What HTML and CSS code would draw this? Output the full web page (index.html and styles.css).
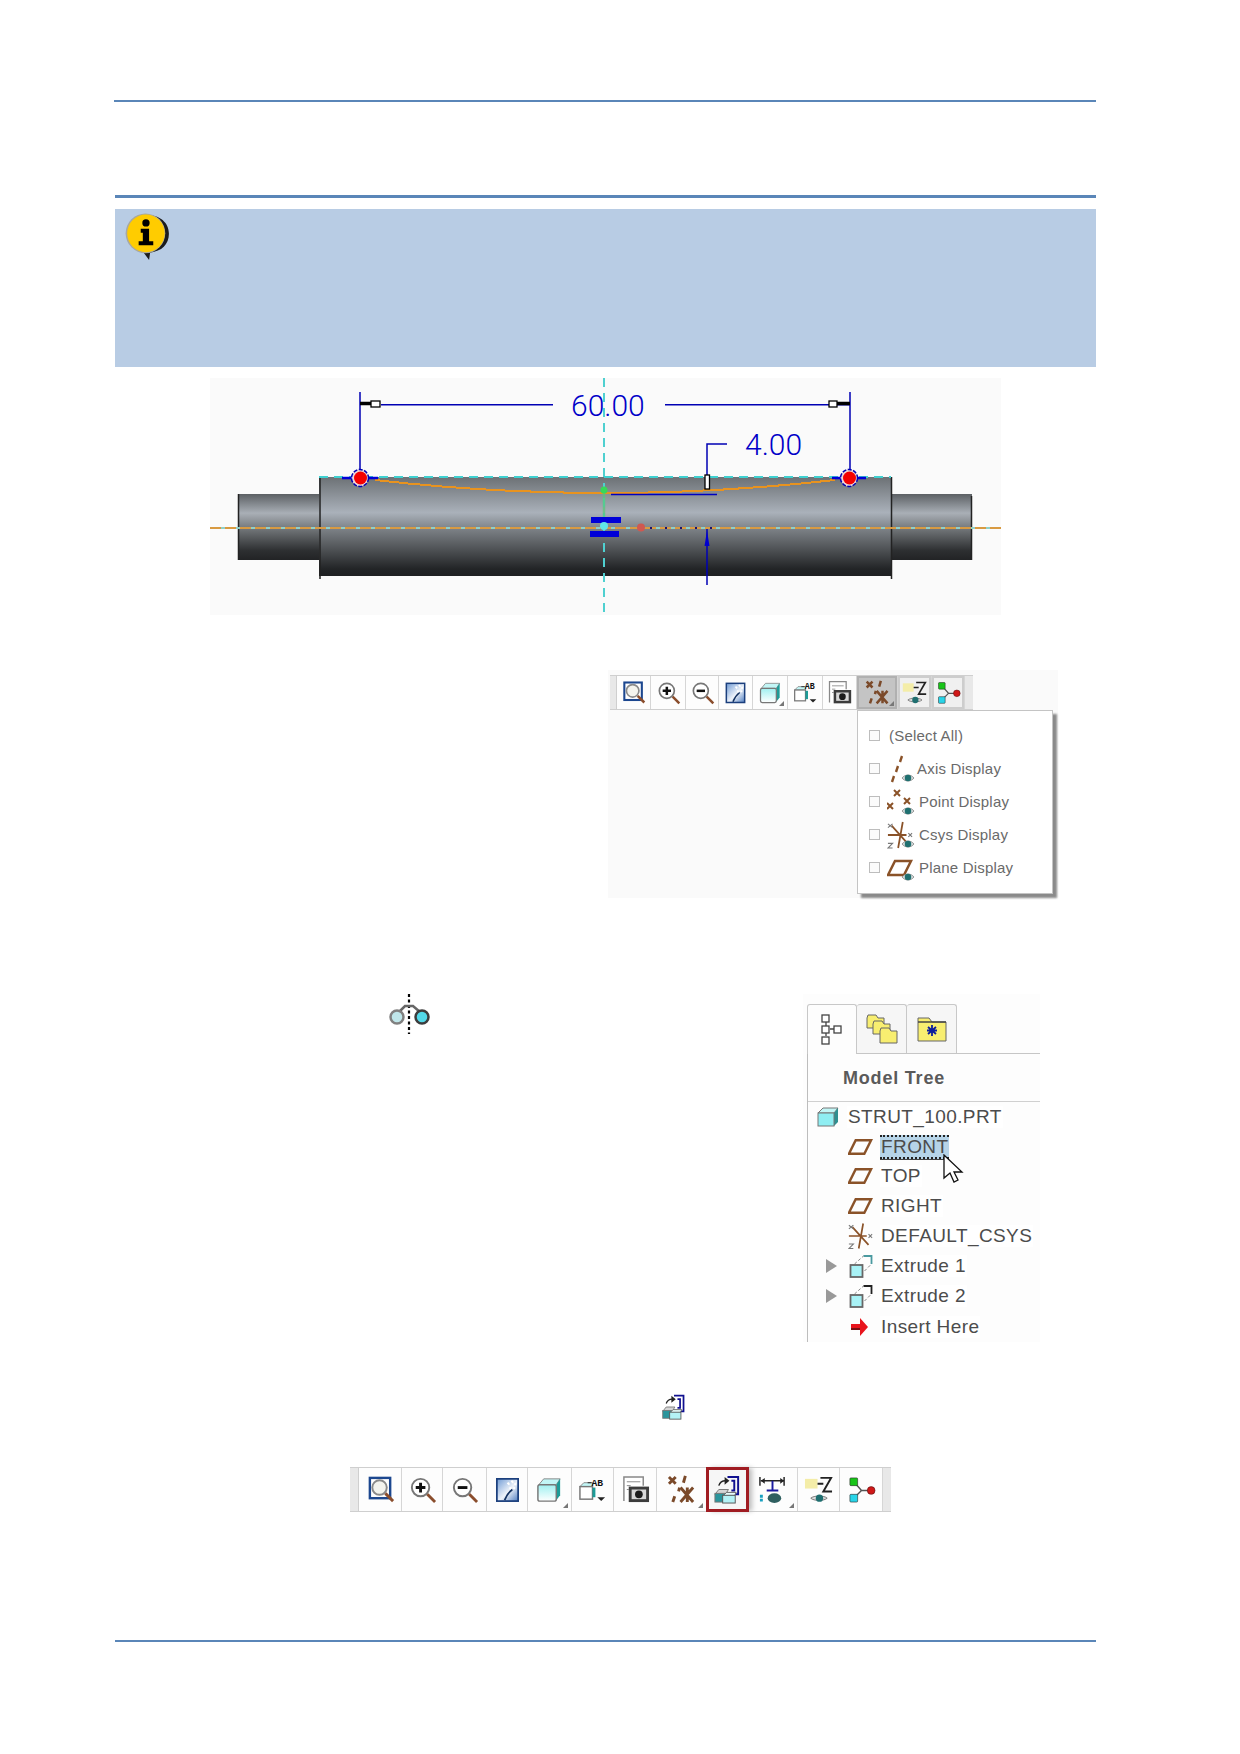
FILE: index.html
```html
<!DOCTYPE html>
<html lang="en">
<head>
  <meta charset="UTF-8">
  <title>Datum display and model tree</title>
  <link rel="stylesheet" href="styles.css">
</head>
<body>

  <svg class="defs" width="0" height="0" aria-hidden="true">
    <defs>
      <linearGradient id="g-main" x1="0" y1="0" x2="0" y2="1">
        <stop offset="0" stop-color="#6c7175"/>
        <stop offset=".36" stop-color="#aab1ba"/>
        <stop offset=".53" stop-color="#7b8085"/>
        <stop offset=".77" stop-color="#46494c"/>
        <stop offset=".93" stop-color="#222426"/>
        <stop offset="1" stop-color="#1f2022"/>
      </linearGradient>
      <linearGradient id="g-stub" x1="0" y1="0" x2="0" y2="1">
        <stop offset="0" stop-color="#5c6064"/>
        <stop offset=".29" stop-color="#a9afb6"/>
        <stop offset=".55" stop-color="#6d7174"/>
        <stop offset=".86" stop-color="#2d2f31"/>
        <stop offset="1" stop-color="#222325"/>
      </linearGradient>
      <linearGradient id="g-cube" x1="0" y1="0" x2="0" y2="1">
        <stop offset="0" stop-color="#9ff0f0"/>
        <stop offset="1" stop-color="#ffffff"/>
      </linearGradient>
      <linearGradient id="g-paint" x1="0" y1="0" x2="1" y2="1">
        <stop offset="0" stop-color="#6f9ad4"/>
        <stop offset=".55" stop-color="#eef3fa"/>
        <stop offset="1" stop-color="#4f7dc0"/>
      </linearGradient>

      <symbol id="i-fit" viewBox="0 0 30 30">
        <rect x="4" y="3" width="21" height="21" fill="#fff" stroke="#1c478f" stroke-width="2.500"/>
        <circle cx="14" cy="13" r="7.500" fill="#f4f4ee" stroke="#8a8a8a" stroke-width="2"/>
        <path d="M20 19l8 8" stroke="#8a4d2c" stroke-width="3"/>
      </symbol>
      <symbol id="i-in" viewBox="0 0 30 30">
        <circle cx="13" cy="13" r="9" fill="#fff" stroke="#777" stroke-width="2"/>
        <path d="M8 13h10M13 8v10" stroke="#111" stroke-width="3"/>
        <path d="M20 20l8 8" stroke="#8a4d2c" stroke-width="3"/>
      </symbol>
      <symbol id="i-out" viewBox="0 0 30 30">
        <circle cx="13" cy="13" r="9" fill="#fff" stroke="#777" stroke-width="2"/>
        <path d="M8 13h10" stroke="#111" stroke-width="3"/>
        <path d="M20 20l8 8" stroke="#8a4d2c" stroke-width="3"/>
      </symbol>
      <symbol id="i-paint" viewBox="0 0 30 30">
        <rect x="4" y="4" width="22" height="23" fill="url(#g-paint)" stroke="#1b3f7d" stroke-width="1.800"/>
        <path d="M12 26c2-5 4-8 8-11" fill="none" stroke="#12305f" stroke-width="1.800"/>
        <path d="M15 8l2 2M19 6l2 2M22 9l2 1M17 13l2 1M21 13l2 1" stroke="#fff" stroke-width="2"/>
      </symbol>
      <symbol id="i-cube" viewBox="0 0 30 30">
        <path d="M4 10l5-6h17l-4 6z" fill="#c2f6f6" stroke="#888"/>
        <path d="M22 10l4-6v17l-4 5z" fill="#1d9c98"/>
        <rect x="3" y="10" width="19" height="17" rx="2" fill="url(#g-cube)" stroke="#777" stroke-width="1.500"/>
      </symbol>
      <symbol id="i-views" viewBox="0 0 30 30">
        <path d="M2 12l4-4h9v4z" fill="#c2f6f6" stroke="#888"/>
        <rect x="2" y="12" width="13" height="13" fill="#fff" stroke="#777" stroke-width="1.500"/>
        <path d="M15 13h3v10h-3z" fill="#1d9c98"/>
        <path d="M10 8h4" stroke="#222"/>
        <text x="14" y="11" class="ab">AB</text>
        <path d="M20 23h8l-4 4z" fill="#222"/>
      </symbol>
      <symbol id="i-camera" viewBox="0 0 30 30">
        <path d="M3 27V2h20v9" fill="#fff" stroke="#888" stroke-width="1.500"/>
        <path d="M6 7h14M6 11h4M6 15h2" stroke="#888"/>
        <rect x="8" y="12" width="21" height="16" fill="#3c3c3c"/>
        <rect x="11" y="15" width="15" height="10" fill="#d8d8d8"/>
        <circle cx="18.500" cy="20" r="4" fill="#1c1c1c"/>
      </symbol>
      <symbol id="i-datum" viewBox="0 0 30 30">
        <g stroke="#7b4a2a" stroke-width="3" fill="none">
          <path d="M2 2l7 7M9 2L2 9M19 1l-2 7M6 28l2-6M12 17l1-4"/>
          <path d="M14 13l13 15M27 13L14 28M21 13v15"/>
        </g>
      </symbol>
      <symbol id="i-spin" viewBox="0 0 30 30">
        <path d="M15 2h11v18h-8" fill="none" stroke="#101090" stroke-width="2"/>
        <path d="M19 6h3v10h-3" fill="none" stroke="#101090" stroke-width="2"/>
        <path d="M6 11c1-3 3-5 7-5" fill="none" stroke="#222" stroke-width="1.500"/>
        <path d="M12 2l5 4-5 4z" fill="#222"/>
        <path d="M2 20l4-5h10l-3 5z" fill="#d4d4d4" stroke="#777"/>
        <rect x="2" y="19" width="11" height="9" fill="#2a959c" stroke="#777"/>
        <path d="M10 22l4-4h10l-2 4z" fill="#e6fafa" stroke="#666"/>
        <rect x="10" y="21" width="13" height="8" fill="#b4f2f6" stroke="#555"/>
      </symbol>
      <symbol id="i-dims" viewBox="0 0 30 30">
        <path d="M2 2v9M27 2v9M3 6h24" stroke="#222" stroke-width="1.500" fill="none"/>
        <path d="M3 6l4-3v6zM27 6l-4-3v6z" fill="#222"/>
        <path d="M15 6v10M9 16h12" stroke="#1a1aa0" stroke-width="2" fill="none"/>
        <path d="M2 22h3M2 26h3" stroke="#18a0c0" stroke-width="3"/>
        <ellipse cx="17" cy="24" rx="7" ry="5" fill="#2f5f60"/>
      </symbol>
      <symbol id="i-note" viewBox="0 0 30 30">
        <rect x="1" y="4" width="13" height="10" fill="#f4eda8"/>
        <path d="M14 9h6M17 3h11l-8 14h9" fill="none" stroke="#222" stroke-width="2"/>
        <path d="M7 24c3-3 14-3 17 0-3 3-14 3-17 0z" fill="#ddd" stroke="#777"/>
        <circle cx="16" cy="24" r="3.800" fill="#1f6f70"/>
      </symbol>
      <symbol id="i-tree" viewBox="0 0 30 30">
        <path d="M8 8l7 8-7 7M15 16h9" fill="none" stroke="#555" stroke-width="1.500"/>
        <rect x="3" y="3" width="8" height="8" rx="1" fill="#18c418" stroke="#222" stroke-width=".6"/>
        <circle cx="25" cy="16" r="4" fill="#d01818" stroke="#511" stroke-width=".6"/>
        <rect x="3" y="20" width="8" height="8" rx="1" fill="#28d4e8" stroke="#222" stroke-width=".6"/>
      </symbol>

      <symbol id="i-eye" viewBox="0 0 14 10">
        <path d="M1 5c3-4 9-4 12 0-3 4-9 4-12 0z" fill="#cfd8d8" stroke="#777" stroke-width=".7"/>
        <circle cx="7" cy="5" r="3.200" fill="#1f7070"/>
      </symbol>
      <symbol id="i-plane" viewBox="0 0 26 18">
        <path d="M8 2h16l-7 14H1z" fill="none" stroke="#8a5228" stroke-width="2.500"/>
      </symbol>
      <symbol id="i-csys" viewBox="0 0 28 30">
        <g stroke="#8a5228" stroke-width="1.900" fill="none">
          <path d="M1 15h20M17 1l-5 28M5 5l18 20"/>
        </g>
        <path d="M1 3l5 4M6 3l-5 4M1 24h5l-5 5h5M23 13l4 4M27 13l-4 4" stroke="#777" stroke-width="1.200" fill="none"/>
      </symbol>
      <symbol id="i-extrude" viewBox="0 0 24 24">
        <path d="M14 2h8v8" stroke="currentColor" stroke-width="1.800" fill="none"/>
        <path d="M5 10l9-8M15 17l7-7" stroke="#888" stroke-dasharray="3 2" fill="none"/>
        <rect x="1" y="11" width="12" height="12" fill="#a8f2f6" stroke="#666" stroke-width="1.800"/>
      </symbol>
    </defs>
  </svg>

  <main class="page">
    <div class="rule rule-head"></div>
    <div class="rule rule-title"></div>

    <section class="note">
      <svg class="note-icon" viewBox="0 0 44 46" width="46" height="48" aria-hidden="true">
        <path d="M24 45l1-7c11-1 18-8 18-18C43 9 34 2 22 2S2 10 3 22c1 8 7 13 15 15z" fill="#1c1c1c"/>
        <circle cx="20.500" cy="19.500" r="19" fill="#a8a8a0"/>
        <circle cx="21" cy="19.500" r="18" fill="#ffcc00"/>
        <circle cx="21" cy="9.500" r="3.500" fill="#000"/>
        <path d="M16 15h8v12h4v4H14v-4h4v-8h-2z" fill="#000"/>
      </svg>
    </section>

    <figure class="fig-shaft">
      <svg viewBox="0 0 791 237" width="791" height="237" role="img" aria-label="Shaft sketch with dimensions 60.00 and 4.00">
        <rect x="28" y="116" width="82" height="66" fill="url(#g-stub)"/>
        <rect x="681" y="116" width="81" height="66" fill="url(#g-stub)"/>
        <rect x="109" y="99" width="572" height="99" fill="url(#g-main)"/>
        <path d="M110 98v103M681.500 99v102M28.500 116v66M761.500 118v64" stroke="#222" stroke-width="1.500"/>

        <path d="M394 0v237" stroke="#4fd0d0" stroke-width="2" stroke-dasharray="9 6"/>
        <path d="M109 99h572" stroke="#3fd0d0" stroke-width="2" stroke-dasharray="9 6"/>
        <path d="M0 150h791" stroke="#8fd0c8" stroke-width="2"/>
        <path d="M0 150h791" stroke="#d89a42" stroke-width="2.200" stroke-dasharray="11 4"/>

        <path d="M165 102Q394 128 625 102" fill="none" stroke="#e8931f" stroke-width="2" shape-rendering="crispEdges"/>

        <path d="M394 112v30" stroke="#58c878" stroke-width="2.500" opacity=".7"/>
        <circle cx="394" cy="112" r="3.500" fill="#38d858"/>
        <rect x="381" y="139" width="30" height="6" fill="#0000d8"/>
        <rect x="380" y="153" width="29" height="6" fill="#0000d8"/>
        <circle cx="394" cy="148" r="4" fill="#60e8e8"/>
        <circle cx="431" cy="149.500" r="4" fill="#d05850"/>
        <path d="M440 150h66" stroke="#20106a" stroke-width="2" stroke-dasharray="2 13"/>

        <path d="M401 116.500h106" stroke="#0000c0" stroke-width="1.500"/>
        <path d="M517 66h-20v31" fill="none" stroke="#0000b4" stroke-width="1.500"/>
        <rect x="495" y="97" width="4.500" height="14" fill="#fff" stroke="#000" stroke-width="1.300"/>
        <path d="M497 151v56" stroke="#0000b4" stroke-width="1.500"/>
        <path d="M497 153l-2.500 15h5z" fill="#0000d0"/>

        <path d="M150 14v85M640 14v85M171 26.700h172M455 26.700h185" fill="none" stroke="#0000b4" stroke-width="1.500"/>
        <path d="M150 25.500h11M627 25.500h13" stroke="#000" stroke-width="3.500"/>
        <rect x="161" y="23" width="9" height="6" fill="#fff" stroke="#000" stroke-width="1.300"/>
        <rect x="619" y="23" width="8" height="6" fill="#fff" stroke="#000" stroke-width="1.300"/>

        <path d="M132 100h36" stroke="#0000d8" stroke-width="2.500"/>
        <path d="M622 100h34" stroke="#0000d8" stroke-width="2.500"/>
        <circle cx="150" cy="100" r="8.500" fill="#f0d8d8" stroke="#0000b4" stroke-width="1.500" stroke-dasharray="4 1.500"/>
        <circle cx="150.500" cy="100" r="6.500" fill="#f40000"/>
        <circle cx="639" cy="100" r="8.500" fill="#f0d8d8" stroke="#0000b4" stroke-width="1.500" stroke-dasharray="4 1.500"/>
        <circle cx="639.500" cy="100" r="6.500" fill="#f40000"/>

        <text x="361" y="38" class="dim">60.00</text>
        <text x="535" y="77" class="dim">4.00</text>
      </svg>
    </figure>

    <figure class="fig-toolbar">
      <div class="toolbar toolbar-small">
        <span class="grip"></span>
        <span class="tool"><svg><use href="#i-fit"/></svg></span>
        <span class="tool"><svg><use href="#i-in"/></svg></span>
        <span class="tool"><svg><use href="#i-out"/></svg></span>
        <span class="tool"><svg><use href="#i-paint"/></svg></span>
        <span class="tool flyout"><svg><use href="#i-cube"/></svg></span>
        <span class="tool"><svg><use href="#i-views"/></svg></span>
        <span class="tool"><svg><use href="#i-camera"/></svg></span>
        <span class="tool flyout active"><svg><use href="#i-datum"/></svg></span>
        <span class="tool pressed"><svg><use href="#i-note"/></svg></span>
        <span class="tool pressed"><svg><use href="#i-tree"/></svg></span>
        <span class="grip"></span>
      </div>
      <ul class="menu">
        <li class="menu-row menu-all"><span class="check"></span>(Select All)</li>
        <li class="menu-row menu-axis">
          <span class="check"></span>
          <span class="menu-icon">
            <svg viewBox="0 0 28 28"><path d="M15 1l-2 6M11 11l-2 6M7 21l-2 6" stroke="#8a5228" stroke-width="2.400"/><use href="#i-eye" x="14" y="18" width="14" height="10"/></svg>
          </span>
          Axis Display
        </li>
        <li class="menu-row">
          <span class="check"></span>
          <span class="menu-icon">
            <svg viewBox="0 0 28 28"><path d="M7 2l6 6M13 2L7 8M0 15l6 6M6 15l-6 6M17 10l6 6M23 10l-6 6" stroke="#8a5228" stroke-width="2"/><use href="#i-eye" x="14" y="18" width="14" height="10"/></svg>
          </span>
          Point Display
        </li>
        <li class="menu-row">
          <span class="check"></span>
          <span class="menu-icon">
            <svg viewBox="0 0 28 28"><use href="#i-csys" x="0" y="0" width="26" height="28"/><use href="#i-eye" x="14" y="18" width="14" height="10"/></svg>
          </span>
          Csys Display
        </li>
        <li class="menu-row">
          <span class="check"></span>
          <span class="menu-icon">
            <svg viewBox="0 0 28 28"><use href="#i-plane" x="0" y="5" width="26" height="18"/><use href="#i-eye" x="14" y="18" width="14" height="10"/></svg>
          </span>
          Plane Display
        </li>
      </ul>
    </figure>

    <div class="tree-row">
      <svg class="mirror-icon" viewBox="0 0 42 40" width="42" height="40" aria-hidden="true">
        <path d="M20 0v40" stroke="#000" stroke-width="2.200" stroke-dasharray="3 2.500"/>
        <path d="M10 18l6-6h4M31 18l-7-6h-4" fill="none" stroke="#666" stroke-width="2.500"/>
        <circle cx="8" cy="23" r="6.500" fill="#bfe6ea" stroke="#808080" stroke-width="2.500"/>
        <circle cx="33" cy="23" r="6.500" fill="#52d8e8" stroke="#3c3c3c" stroke-width="2.500"/>
      </svg>

      <figure class="fig-tree">
        <div class="tree-tabs">
          <span class="tab tab-on">
            <svg viewBox="0 0 24 32" width="24" height="32"><path d="M6 8v4M6 18v4M10 15h4" stroke="#444" stroke-width="1.300"/><g fill="#fff" stroke="#444" stroke-width="1.300"><rect x="2" y="1" width="7" height="7"/><rect x="2" y="12" width="7" height="7"/><rect x="2" y="23" width="7" height="7"/><rect x="14" y="12" width="7" height="7"/></g></svg>
          </span>
          <span class="tab">
            <svg viewBox="0 0 32 32" width="32" height="32"><g stroke="#666" fill="#f8ee70"><path d="M1 5l1-3h8l2 3h6v10H1z"/><path d="M7 11l1-3h8l2 3h6v10H7z"/><path d="M14 18l1-3h8l2 3h6v12H14z"/></g></svg>
          </span>
          <span class="tab">
            <svg viewBox="0 0 30 26" width="30" height="26"><path d="M1 6V2h11l3 4h14v19H1z" fill="#f8ee70" stroke="#666"/><path d="M1 6h28" stroke="#444" stroke-width="1.500"/><path d="M15 9v11M10 14.500h10M11 11l8 7M19 11l-8 7" stroke="#0c1c9c" stroke-width="1.800"/></svg>
          </span>
        </div>
        <div class="tree-body">
          <h2 class="tree-title">Model Tree</h2>
          <ul class="tree-list">
            <li class="tree-item tree-root">
              <svg viewBox="0 0 22 20" width="22" height="20"><path d="M1 6l5-5h15l-4 5z" fill="#c2f6f6" stroke="#777"/><path d="M17 6l4-5v14l-4 4z" fill="#2f8f90"/><rect x="1" y="6" width="16" height="13" fill="#8feef2" stroke="#777"/></svg>
              <span class="label">STRUT_100.PRT</span>
            </li>
            <li class="tree-item">
              <svg class="node"><use href="#i-plane"/></svg>
              <span class="label label-on">FRONT</span>
            </li>
            <li class="tree-item">
              <svg class="node"><use href="#i-plane"/></svg>
              <span class="label">TOP</span>
            </li>
            <li class="tree-item">
              <svg class="node"><use href="#i-plane"/></svg>
              <span class="label">RIGHT</span>
            </li>
            <li class="tree-item">
              <svg class="node node-tall"><use href="#i-csys"/></svg>
              <span class="label">DEFAULT_CSYS</span>
            </li>
            <li class="tree-item tree-feature">
              <span class="caret"></span>
              <svg class="node node-extrude node-first"><use href="#i-extrude"/></svg>
              <span class="label">Extrude 1</span>
            </li>
            <li class="tree-item tree-feature">
              <span class="caret"></span>
              <svg class="node node-extrude"><use href="#i-extrude"/></svg>
              <span class="label">Extrude 2</span>
            </li>
            <li class="tree-item tree-insert">
              <svg class="node" viewBox="0 0 25 18"><path d="M3 6h9V0l8 9-8 9v-6H3z" fill="#e8141c"/><path d="M3 10h9v8l8-9-8 9v-6H3z" fill="#7a1014"/></svg>
              <span class="label">Insert Here</span>
            </li>
          </ul>
        </div>
        <svg class="cursor" viewBox="0 0 22 30" width="22" height="30" aria-hidden="true">
          <path d="M1 1v23l6-5 4 9 4-2-4-8h8z" fill="#fff" stroke="#111" stroke-width="1.300"/>
        </svg>
      </figure>
    </div>

    <svg class="spin-inline" width="26" height="26"><use href="#i-spin"/></svg>

    <div class="toolbar toolbar-large">
      <span class="grip"></span>
      <span class="tool"><svg><use href="#i-fit"/></svg></span>
      <span class="tool"><svg><use href="#i-in"/></svg></span>
      <span class="tool"><svg><use href="#i-out"/></svg></span>
      <span class="tool"><svg><use href="#i-paint"/></svg></span>
      <span class="tool flyout"><svg><use href="#i-cube"/></svg></span>
      <span class="tool"><svg><use href="#i-views"/></svg></span>
      <span class="tool"><svg><use href="#i-camera"/></svg></span>
      <span class="tool flyout"><svg><use href="#i-datum"/></svg></span>
      <span class="tool marked"><svg><use href="#i-spin"/></svg></span>
      <span class="tool flyout"><svg><use href="#i-dims"/></svg></span>
      <span class="tool"><svg><use href="#i-note"/></svg></span>
      <span class="tool"><svg><use href="#i-tree"/></svg></span>
      <span class="grip"></span>
    </div>

    <div class="rule rule-foot"></div>
  </main>

</body>
</html>
```

FILE: styles.css
```css
body {
  background: #fff;
  color: #4c4c4c;
  font-family: "Liberation Sans", Arial, sans-serif;
  margin: 0;
}

ul {
  list-style: none;
  margin: 0;
  padding: 0;
}

figure {
  margin: 0;
}

.defs {
  display: block;
  height: 0;
}

.page {
  margin-left: 115px;
  padding-top: 100px;
  width: 981px;
}

.rule {
  background: #5a86b8;
  height: 2px;
}

.rule-head {
  margin-left: -1px;
}

.rule-title {
  height: 3px;
  margin-top: 93px;
}

.rule-foot {
  margin-top: 128px;
}

.note {
  background: #b8cce4;
  height: 158px;
  margin-top: 11px;
  padding: 4px 0 0 9px;
  box-sizing: border-box;
}

.note-icon {
  display: block;
}

.fig-shaft {
  background: #fafafa;
  height: 237px;
  margin: 11px 0 0 95px;
  width: 791px;
}

.fig-shaft svg {
  display: block;
}

.dim {
  fill: #0000c8;
  font-family: Roboto, "Liberation Sans", sans-serif;
  font-size: 30px;
  font-weight: 300;
}

.ab {
  fill: #111;
  font-family: "Liberation Mono", monospace;
  font-size: 10px;
  font-weight: 700;
}

/* toolbars */
.fig-toolbar {
  background: #fafafa;
  height: 228px;
  margin: 55px 0 0 493px;
  padding: 5px 0 0 2px;
  position: relative;
  box-sizing: border-box;
  width: 450px;
}

.toolbar {
  background: #fdfdfd;
  border-block: 1px solid #cfcfcf;
  box-sizing: border-box;
  display: grid;
}

.toolbar-small {
  grid-template-columns: 7px 34px 35px 33px 34px 35px 35px 34px 41px 34px 33px 8px;
  height: 35px;
  width: 363px;
}

.toolbar-small svg {
  height: 25px;
  width: 25px;
}

.toolbar-large {
  grid-template-columns: 9px 43px 41px 44px 41px 44px 42px 43px 50px 41px 50px 42px 43px 8px;
  height: 45px;
  margin: 47px 0 0 235px;
  width: 541px;
}

.toolbar-large svg {
  height: 29px;
  width: 29px;
}

.grip {
  background: #e8e8e8;
}

.tool {
  align-items: center;
  border-right: 1px solid #d6d6d6;
  box-sizing: border-box;
  display: flex;
  justify-content: center;
  position: relative;
}

.grip:first-child {
  border-right: 1px solid #cfcfcf;
}

.tool.active {
  background: #c4c4c4;
  box-shadow: inset 0 0 0 2px #b0b0b0;
}

.tool.pressed {
  background: #f0f0f0;
  box-shadow: inset 0 0 0 2px #cdcdcd;
}

.tool.marked {
  background: #f6f6f6;
  border: 0;
  box-shadow: 4px 0 5px #bbb;
  outline: 3px solid #a01c22;
  outline-offset: -2px;
  z-index: 1;
}

.flyout::after {
  border-bottom: 5px solid #777;
  border-left: 5px solid transparent;
  bottom: 3px;
  content: "";
  position: absolute;
  right: 3px;
}

/* dropdown */
.menu {
  background: #fff;
  border: 1px solid #c4c4c4;
  box-shadow: 4px 4px 2px #8a8a8a;
  box-sizing: border-box;
  color: #6a6a6a;
  font-size: 15px;
  height: 184px;
  left: 249px;
  letter-spacing: .2px;
  padding-top: 8px;
  position: absolute;
  top: 40px;
  width: 196px;
}

.menu-row {
  align-items: center;
  display: flex;
  height: 33px;
  padding-left: 11px;
}

.menu-all .check {
  margin-right: 9px;
}

.check {
  background: #fbfbfb;
  border: 1px solid #bdbdbd;
  box-sizing: border-box;
  height: 11px;
  margin-right: 7px;
  width: 11px;
}

.menu-icon {
  display: flex;
  height: 28px;
  margin-right: 4px;
  width: 28px;
}

.menu-axis .menu-icon {
  margin-right: 2px;
}

/* model tree */
.tree-row {
  align-items: flex-start;
  display: flex;
  margin-top: 96px;
  padding-left: 274px;
}

.mirror-icon {
  flex: none;
}

.fig-tree {
  background: #fdfdfd;
  height: 348px;
  margin-left: auto;
  margin-right: 56px;
  position: relative;
  width: 237px;
}

.tree-tabs {
  border-bottom: 1px solid #c6c6c6;
  box-sizing: border-box;
  display: flex;
  height: 60px;
  margin-left: 4px;
  padding-top: 10px;
}

.tab {
  align-items: center;
  background: #f6f6f6;
  border: 1px solid #c8c8c8;
  border-bottom: 0;
  border-left: 0;
  border-radius: 3px 3px 0 0;
  box-sizing: border-box;
  display: flex;
  height: 49px;
  justify-content: center;
  width: 50px;
}

.tab-on {
  background: #fdfdfd;
  border-left: 1px solid #c8c8c8;
  height: 50px;
  margin-bottom: -1px;
  width: 50px;
}

.tree-body {
  border-left: 1px solid #bdbdbd;
  height: 288px;
  margin-left: 4px;
}

.tree-title {
  border-bottom: 1px solid #d0d0d0;
  box-sizing: border-box;
  color: #5a5a5a;
  font-size: 18px;
  height: 48px;
  letter-spacing: .8px;
  line-height: 49px;
  margin: 0;
  padding-left: 35px;
}

.tree-item {
  align-items: center;
  display: flex;
  font-size: 19px;
  height: 29.8px;
  letter-spacing: .4px;
  padding-left: 40px;
}

.tree-root {
  padding-left: 9px;
}

.tree-root svg {
  margin-right: 8px;
}

.tree-feature {
  padding-left: 18px;
}

.tree-insert {
  padding-top: 2px;
}

.caret {
  border-bottom: 7px solid transparent;
  border-left: 11px solid #999;
  border-top: 7px solid transparent;
  margin-right: 12px;
}

.node {
  flex: none;
  height: 18px;
  margin-right: 7px;
  width: 25px;
}

.node-tall {
  height: 28px;
}

.node-extrude {
  color: #222;
  height: 24px;
  margin-right: 6px;
}

.node-first {
  color: #4a9aa0;
}

.label {
  background: #fff;
  padding-inline: 1px;
}

.label-on {
  background: #b6d4e8;
  border-block: 2px dotted #222;
  box-shadow: 0 1px 0 #444;
  line-height: 20px;
}

.cursor {
  left: 140px;
  position: absolute;
  top: 160px;
}

.spin-inline {
  display: block;
  margin: 52px 0 0 546px;
}
```
